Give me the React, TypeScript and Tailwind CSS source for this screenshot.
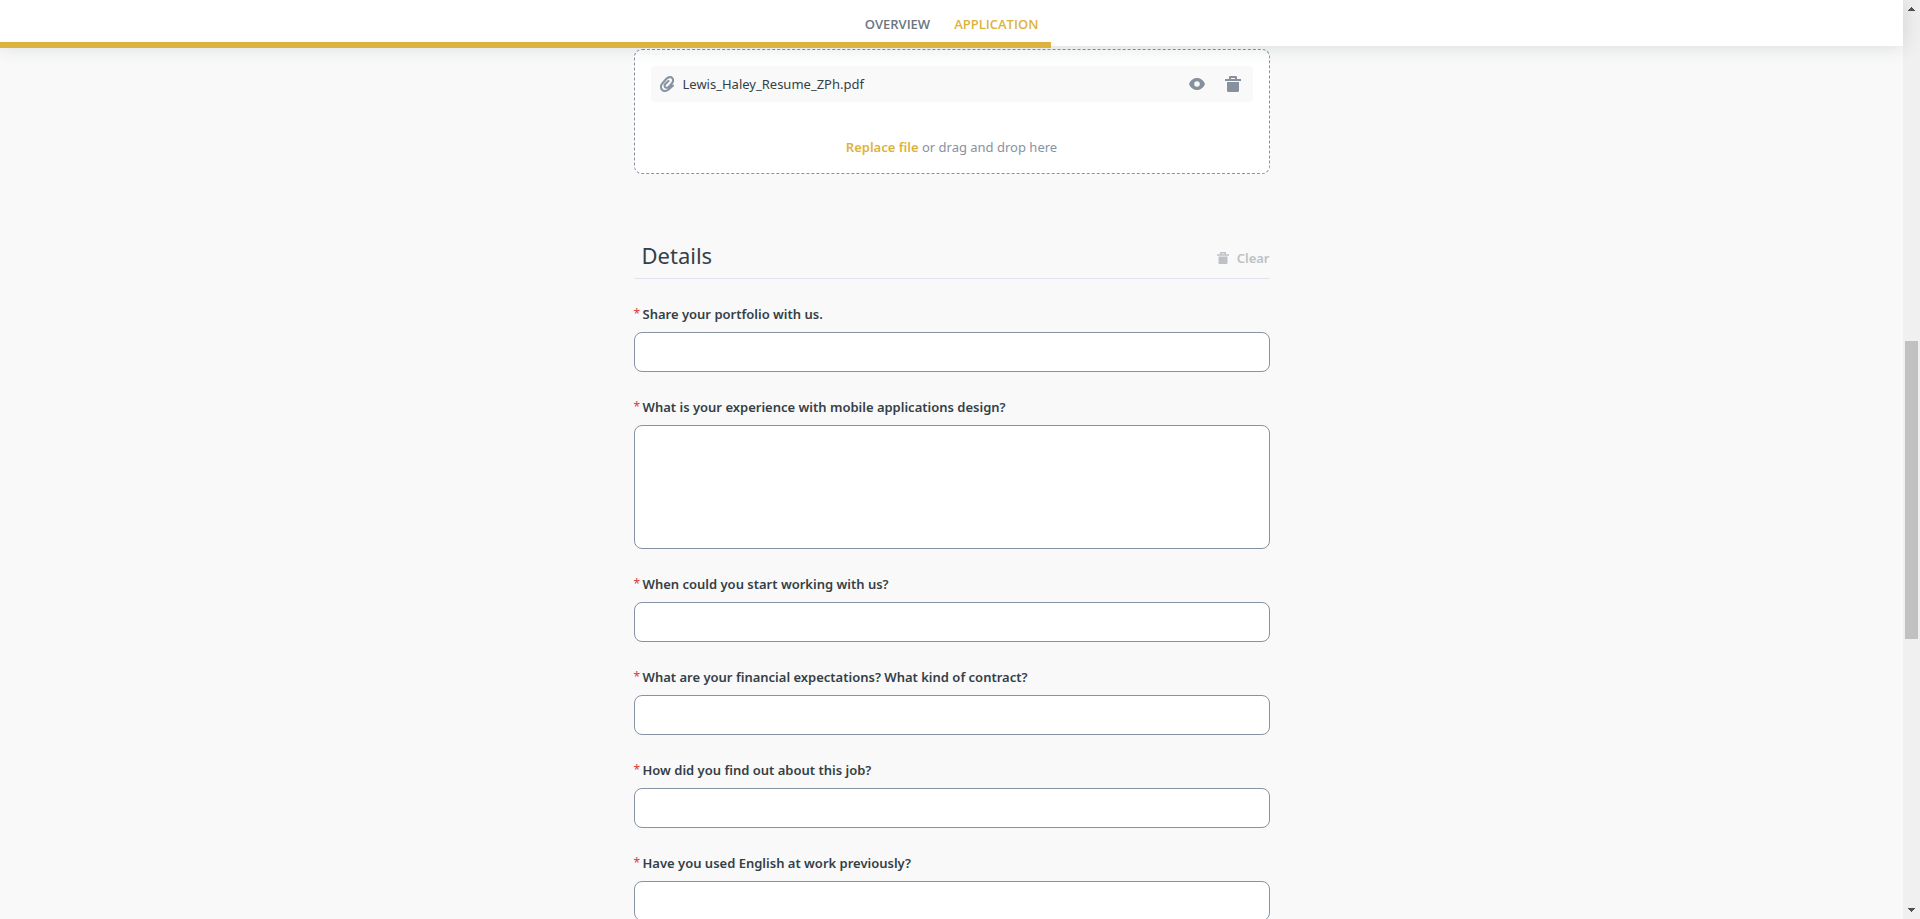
import { useState } from "react";

type Question = { id: string; label: string; multiline?: boolean };

const questions: Question[] = [
  { id: "portfolio", label: "Share your portfolio with us." },
  { id: "experience", label: "What is your experience with mobile applications design?", multiline: true },
  { id: "start", label: "When could you start working with us?" },
  { id: "finance", label: "What are your financial expectations? What kind of contract?" },
  { id: "source", label: "How did you find out about this job?" },
  { id: "english", label: "Have you used English at work previously?" },
];

function ClipIcon({ className }: { className: string }) {
  return (
    <svg
      viewBox="0 0 14 16"
      className={className}
      fill="none"
      stroke="currentColor"
      strokeWidth="2.1"
      strokeLinecap="round"
      aria-hidden="true"
    >
      <path d="M13 9.500L9.200 13C6.700 15.400 3.700 15.500 2 13.700C.400 11.900.700 9 2.700 7L6.200 3C8.300.700 11 .500 12.300 2.100C13.500 3.700 13.100 6 11.600 7.700L8.900 10.700C7.700 12 6.100 12.100 5.200 11.200C4.300 10.200 4.500 8.800 5.500 7.700L8.500 5" />
    </svg>
  );
}

function EyeIcon({ className }: { className: string }) {
  return (
    <svg viewBox="0 0 16 12" className={className} fill="currentColor" aria-hidden="true">
      <path
        fillRule="evenodd"
        d="M8 0C4.300 0 1.300 2.500 0 6c1.300 3.500 4.300 6 8 6s6.700-2.500 8-6C14.700 2.500 11.700 0 8 0zM8 3.200a2.800 2.800 0 1 1 0 5.600 2.800 2.800 0 0 1 0-5.600z"
      />
    </svg>
  );
}

function TrashIcon({ className }: { className: string }) {
  return (
    <svg viewBox="0 0 16 16" className={className} fill="currentColor" aria-hidden="true">
      <path
        fillRule="evenodd"
        d="M4 3V1a1 1 0 0 1 1-1h6a1 1 0 0 1 1 1v2h4v2H0V3zM6 2v1h4V2zM2 6h12v8.500a1.500 1.500 0 0 1-1.500 1.500h-9A1.500 1.500 0 0 1 2 14.500z"
      />
    </svg>
  );
}

function Header() {
  return (
    <header className="relative z-10 flex h-[46px] shrink-0 items-center justify-center bg-white pt-0.5 shadow-[0_0_20px_rgba(40,50,60,0.16)]">
      <nav className="flex gap-6 font-['Open_Sans','Noto_Sans',sans-serif] text-[13px] leading-5 font-semibold">
        <a href="#overview" className="text-[#6b7680]">OVERVIEW</a>
        <a href="#application" className="text-[#dcb33e]">APPLICATION</a>
      </nav>
      <div className="absolute left-0 -bottom-[2px] h-[6px] w-[55.25%] bg-[#dcb33e]" />
    </header>
  );
}

function FileDrop() {
  return (
    <section className="flex flex-col rounded-lg border border-dashed border-[#8792a2] bg-white p-4">
      <div className="flex h-9 items-center rounded bg-[#f9f9f9] px-3 pl-[9px]">
        <ClipIcon className="mr-[9px] h-4 w-3.5 text-[#8792a2]" />
        <span className="grow text-[13px] leading-5 text-[#343f48]">Lewis_Haley_Resume_ZPh.pdf</span>
        <button type="button" aria-label="Preview file" className="mr-5 text-[#87919e]">
          <EyeIcon className="h-3 w-4" />
        </button>
        <button type="button" aria-label="Delete file" className="text-[#87919e]">
          <TrashIcon className="size-4" />
        </button>
      </div>
      <p className="mt-[35px] text-center text-[13px] leading-5 text-[#8792a2]">
        <button type="button" className="font-semibold text-[#dcb33e]">Replace file</button> or drag and drop here
      </p>
    </section>
  );
}

function Field({ question }: { question: Question }) {
  const box = "block w-full rounded-lg border border-[#8792a2] bg-white px-3 text-[13px] text-[#343f48] outline-none";
  return (
    <div>
      <label htmlFor={question.id} className="mb-2 flex text-[13px] leading-5 font-semibold text-[#343f48]">
        <span className="w-[9px] text-[12px] leading-5 font-normal text-[#d93a3a]">*</span>
        {question.label}
      </label>
      {question.multiline ? (
        <textarea id={question.id} className={`${box} h-[124px] resize-none py-2`} />
      ) : (
        <input id={question.id} type="text" className={`${box} h-10`} />
      )}
    </div>
  );
}

function ScrollRail() {
  return (
    <div className="flex w-[17px] shrink-0 flex-col items-center bg-[#f0f0f0]" aria-hidden="true">
      <svg viewBox="0 0 17 17" className="size-[17px]" fill="#505050">
        <path d="M5 11h7v-1h-1V9h-1V8H9V7H8v1H7v1H6v1H5z" />
      </svg>
      <div className="flex-[324]" />
      <div className="w-[13px] flex-[298] bg-[#c1c1c1]" />
      <div className="flex-[263]" />
      <svg viewBox="0 0 17 17" className="size-[17px]" fill="#505050">
        <path d="M5 6h7v1h-1v1h-1v1H9v1H8V9H7V8H6V7H5z" />
      </svg>
    </div>
  );
}

export default function App() {
  const [formKey, setFormKey] = useState(0);
  return (
    <div className="flex h-screen bg-[#f9f9f9] font-['Noto_Sans','Open_Sans',sans-serif]">
      <div className="flex min-w-0 grow flex-col">
        <Header />
        <main className="grow overflow-y-auto px-4 pt-[3px] pb-10 [scrollbar-width:none]">
          <div className="mx-auto max-w-[636px]">
            <FileDrop />
            <section className="mt-16">
              <div className="mb-[25px] flex h-[41px] items-center justify-between border-b border-[#dee4ea] pl-2">
                <h2 className="pb-1.5 text-[22px] leading-8 text-[#343f48]">Details</h2>
                <button
                  type="button"
                  onClick={() => setFormKey((key) => key + 1)}
                  className="flex items-center gap-2 text-[13px] leading-5 font-semibold text-[#bdc1c6]"
                >
                  <TrashIcon className="size-3" />
                  Clear
                </button>
              </div>
              <form key={formKey} className="flex flex-col gap-[25px]">
                {questions.map((question) => (
                  <Field key={question.id} question={question} />
                ))}
              </form>
            </section>
          </div>
        </main>
      </div>
      <ScrollRail />
    </div>
  );
}
